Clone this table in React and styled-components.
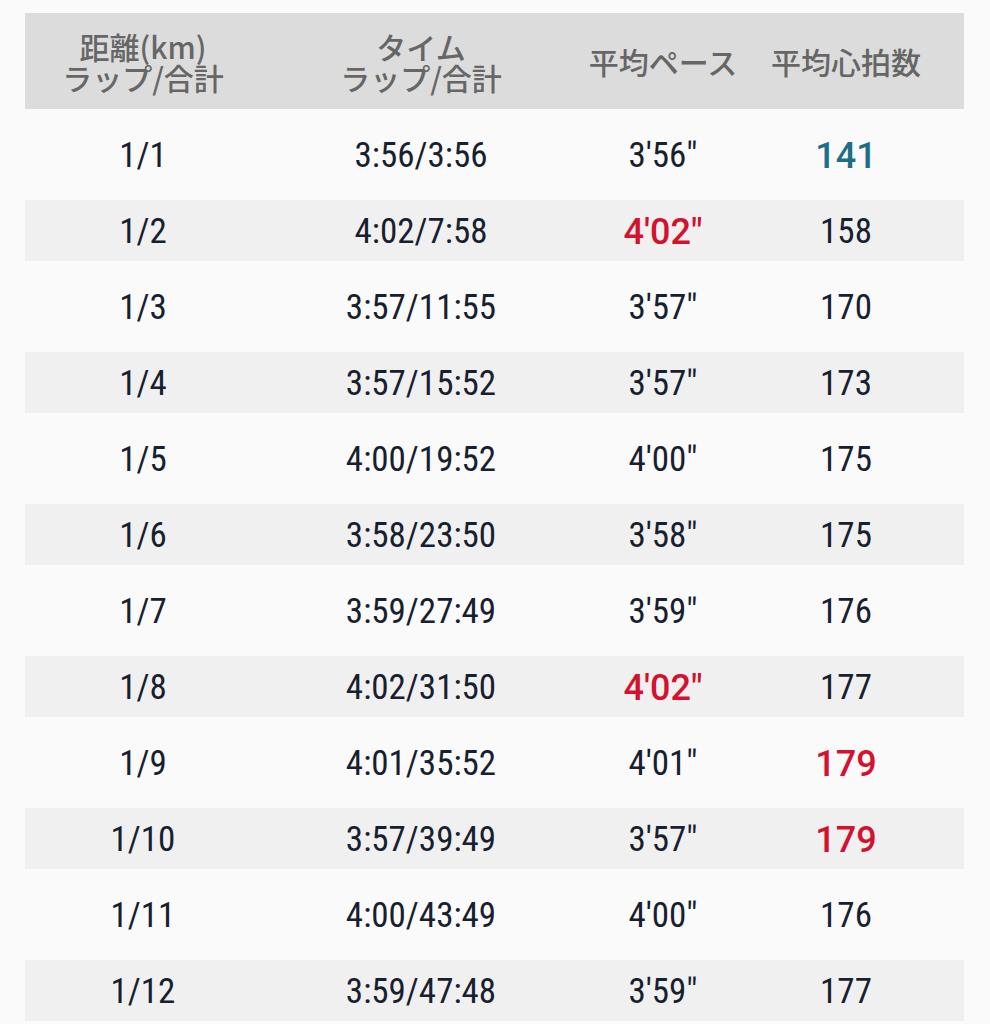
import React from "react";
import styled, { createGlobalStyle } from "styled-components";

const GlobalStyle = createGlobalStyle`
  html, body {
    margin: 0;
    padding: 0;
    background: #fafafa;
  }
`;

const Page = styled.div`
  padding: 13px 26px 0 25px;
  display: flex;
  flex-direction: column;
  gap: 15px;
`;

const Row = styled.div`
  display: grid;
  grid-template-columns: 236px 320px 164px 202px;
  align-items: center;
  height: ${(p) => (p.$header ? 96 : 61)}px;
  background: ${(p) => (p.$header ? "#dcdcdc" : p.$striped ? "#f0f0f0" : "transparent")};
`;

const HeadCell = styled.div`
  display: flex;
  flex-direction: column;
  align-items: center;
  font-family: "Noto Sans CJK JP", "Noto Sans", sans-serif;
  font-weight: 500;
  font-size: 30px;
  color: #666666;
  padding-top: 1px;
`;

const HeadLine = styled.div`
  height: 31px;
  line-height: 31px;
  white-space: nowrap;
`;

const Cell = styled.div`
  text-align: center;
  font-family: Roboto, "Liberation Sans", sans-serif;
  font-stretch: ${(p) => (p.$hi ? "100%" : "75%")};
  font-weight: ${(p) => (p.$hi ? 500 : 400)};
  font-size: ${(p) => (p.$hi ? 36 : 35)}px;
  color: ${(p) => (p.$hi === "red" ? "#d3122f" : p.$hi === "blue" ? "#1c6f87" : "#17202e")};
  padding-top: 2px;
`;

const headers = [
  ["距離(km)", "ラップ/合計"],
  ["タイム", "ラップ/合計"],
  ["平均ペース"],
  ["平均心拍数"],
];

const laps = [
  ["1/1", "3:56/3:56", "3'56\"", "141", null, "blue"],
  ["1/2", "4:02/7:58", "4'02\"", "158", "red", null],
  ["1/3", "3:57/11:55", "3'57\"", "170", null, null],
  ["1/4", "3:57/15:52", "3'57\"", "173", null, null],
  ["1/5", "4:00/19:52", "4'00\"", "175", null, null],
  ["1/6", "3:58/23:50", "3'58\"", "175", null, null],
  ["1/7", "3:59/27:49", "3'59\"", "176", null, null],
  ["1/8", "4:02/31:50", "4'02\"", "177", "red", null],
  ["1/9", "4:01/35:52", "4'01\"", "179", null, "red"],
  ["1/10", "3:57/39:49", "3'57\"", "179", null, "red"],
  ["1/11", "4:00/43:49", "4'00\"", "176", null, null],
  ["1/12", "3:59/47:48", "3'59\"", "177", null, null],
];

export default function App() {
  return (
    <>
      <GlobalStyle />
      <Page>
        <Row $header>
          {headers.map((lines) => (
            <HeadCell key={lines.join()}>
              {lines.map((line) => (
                <HeadLine key={line}>{line}</HeadLine>
              ))}
            </HeadCell>
          ))}
        </Row>
        {laps.map(([dist, time, pace, hr, paceHi, hrHi], i) => (
          <Row key={dist} $striped={i % 2 === 1}>
            <Cell>{dist}</Cell>
            <Cell>{time}</Cell>
            <Cell $hi={paceHi}>{pace}</Cell>
            <Cell $hi={hrHi}>{hr}</Cell>
          </Row>
        ))}
      </Page>
    </>
  );
}
